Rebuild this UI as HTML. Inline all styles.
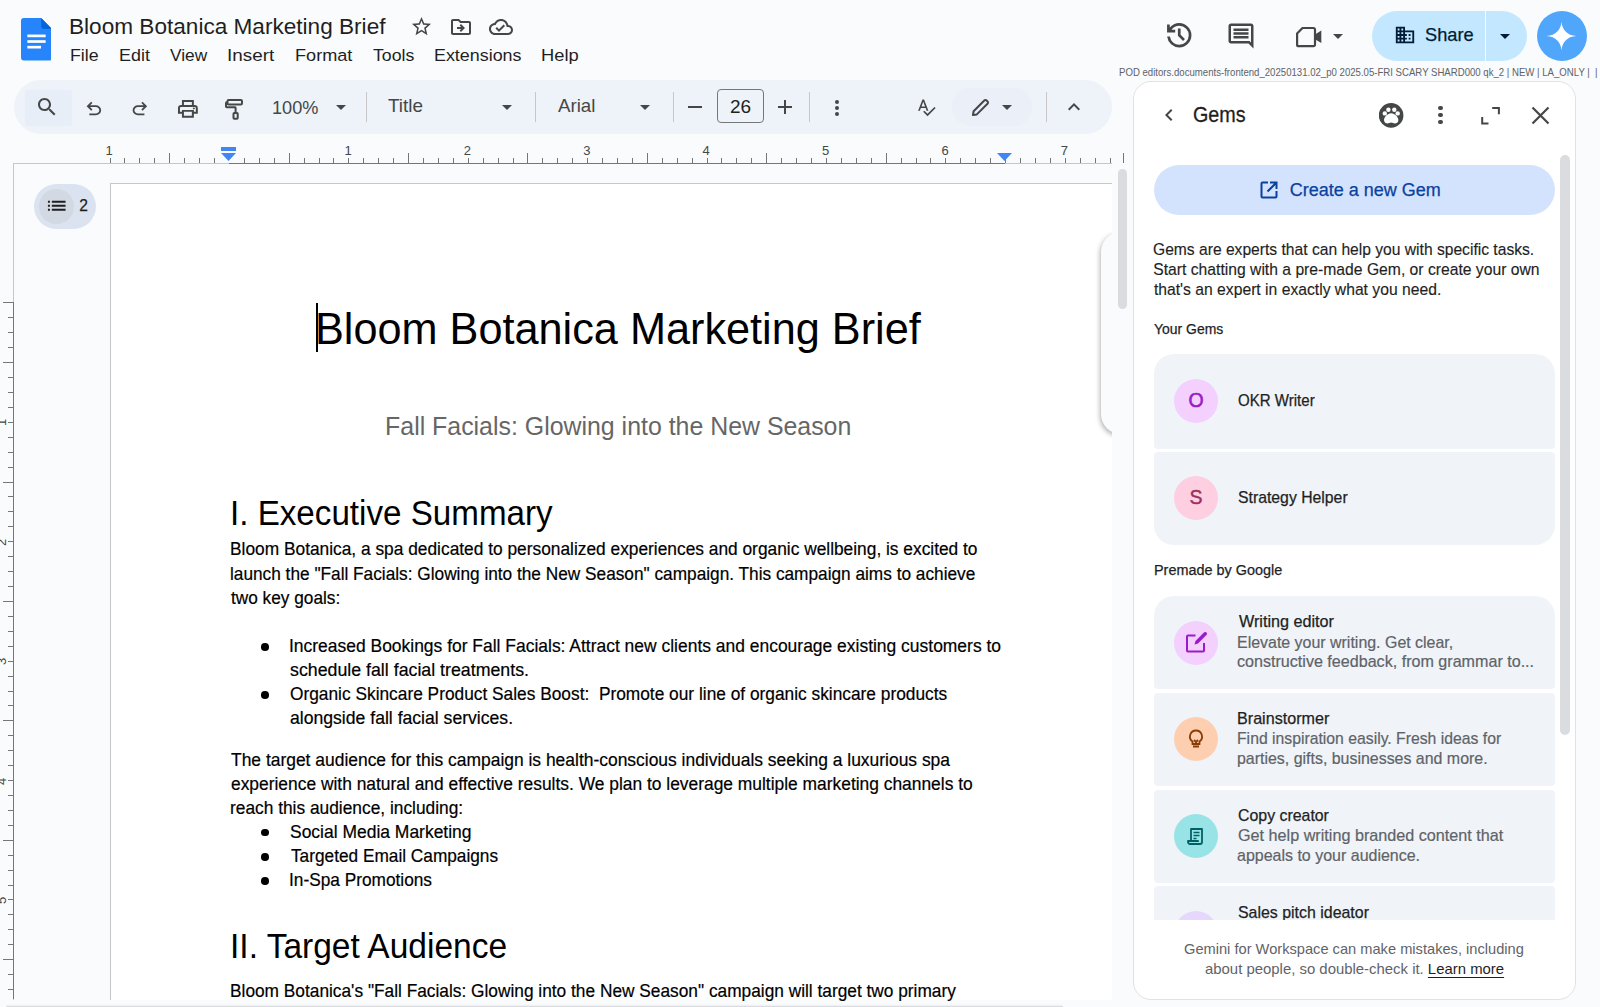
<!DOCTYPE html>
<html><head><meta charset="utf-8">
<style>
*{margin:0;padding:0;box-sizing:border-box}
html,body{width:1600px;height:1007px;overflow:hidden;background:#f9fbfd;font-family:"Liberation Sans",sans-serif;color:#1f1f1f;position:relative}
.a{position:absolute}
.t{position:absolute;white-space:nowrap;line-height:1}
svg{display:block}
</style></head>
<body>
<svg class="a" style="left:20.6px;top:18.3px" width="30.8" height="42.6" viewBox="0 0 32 43" preserveAspectRatio="none">
<path d="M3 0H21L32 11V40a3 3 0 0 1-3 3H3a3 3 0 0 1-3-3V3a3 3 0 0 1 3-3z" fill="#2684fc"/>
<path d="M21 0L32 11H24a3 3 0 0 1-3-3z" fill="#0066da"/>
<rect x="6.6" y="16.7" width="19" height="2.7" fill="#fff"/>
<rect x="6.6" y="22.4" width="19" height="2.7" fill="#fff"/>
<rect x="6.6" y="28.1" width="14.2" height="2.7" fill="#fff"/></svg>
<div class="t" id="doctitle" style="left:69.03px;top:16.46px;font-size:22.6px;color:#1f1f1f;font-weight:400;">Bloom Botanica Marketing Brief</div>
<div class="t" id="menu0" style="left:70.20px;top:46.57px;font-size:17.4px;color:#1f1f1f;font-weight:400;transform:scaleX(1.0192);transform-origin:0 0;">File</div>
<div class="t" id="menu1" style="left:118.67px;top:46.57px;font-size:17.4px;color:#1f1f1f;font-weight:400;transform:scaleX(1.0298);transform-origin:0 0;">Edit</div>
<div class="t" id="menu2" style="left:170.11px;top:46.57px;font-size:17.4px;color:#1f1f1f;font-weight:400;transform:scaleX(0.9939);transform-origin:0 0;">View</div>
<div class="t" id="menu3" style="left:226.98px;top:46.57px;font-size:17.4px;color:#1f1f1f;font-weight:400;transform:scaleX(1.0846);transform-origin:0 0;">Insert</div>
<div class="t" id="menu4" style="left:294.57px;top:46.57px;font-size:17.4px;color:#1f1f1f;font-weight:400;transform:scaleX(1.0420);transform-origin:0 0;">Format</div>
<div class="t" id="menu5" style="left:373.39px;top:46.57px;font-size:17.4px;color:#1f1f1f;font-weight:400;transform:scaleX(1.0200);transform-origin:0 0;">Tools</div>
<div class="t" id="menu6" style="left:434.49px;top:46.57px;font-size:17.4px;color:#1f1f1f;font-weight:400;transform:scaleX(1.0285);transform-origin:0 0;">Extensions</div>
<div class="t" id="menu7" style="left:540.72px;top:46.57px;font-size:17.4px;color:#1f1f1f;font-weight:400;transform:scaleX(1.0533);transform-origin:0 0;">Help</div>
<svg class="a" style="left:409.50px;top:14.50px" width="23" height="23" viewBox="0 0 24 24"><path d="M22 9.24l-7.19-.62L12 2 9.19 8.63 2 9.24l5.46 4.73L5.82 21 12 17.27 18.18 21l-1.63-7.03L22 9.24zM12 15.4l-3.76 2.27 1-4.28-3.32-2.88 4.38-.38L12 6.1l1.71 4.04 4.38.38-3.32 2.88 1 4.28L12 15.4z" fill="#444746"/></svg>
<svg class="a" style="left:449.00px;top:14.50px" width="24" height="24" viewBox="0 0 24 24"><path d="M20 6h-8l-2-2H4c-1.1 0-1.99.9-1.99 2L2 18c0 1.1.9 2 2 2h16c1.1 0 2-.9 2-2V8c0-1.1-.9-2-2-2zm0 12H4V6h5.17l2 2H20v10zm-7.84-6H8v2h4.16l-1.59 1.59L11.99 17 16 13.01 11.99 9l-1.41 1.41L12.16 12z" fill="#444746"/></svg>
<svg class="a" style="left:489.00px;top:14.50px" width="24" height="24" viewBox="0 0 24 24"><path d="M19.35 10.04C18.67 6.59 15.64 4 12 4 9.11 4 6.6 5.64 5.35 8.04 2.34 8.36 0 10.91 0 14c0 3.31 2.69 6 6 6h13c2.76 0 5-2.24 5-5 0-2.64-2.05-4.78-4.65-4.96zM19 18H6c-2.21 0-4-1.79-4-4 0-2.05 1.53-3.76 3.56-3.97l1.07-.11.5-.95C8.08 7.14 9.94 6 12 6c2.62 0 4.88 1.86 5.39 4.43l.3 1.5 1.53.11c1.56.1 2.78 1.41 2.78 2.96 0 1.65-1.35 3-3 3zm-9-3.82l-2.09-2.09L6.5 13.5 10 17l6.01-6.01-1.41-1.41z" fill="#444746"/></svg>
<svg class="a" style="left:1162.75px;top:19.05px" width="32.5" height="32.5" viewBox="0 -960 960 960"><path d="M480-120q-138 0-240.5-91.5T122-440h82q14 104 92.5 172T480-200q117 0 198.5-81.5T760-480q0-117-81.5-198.5T480-760q-69 0-129 32t-101 88h110v80H120v-240h80v94q51-64 124.5-99T480-840q75 0 140.5 28.5t114 77q48.5 48.5 77 114T840-480q0 75-28.5 140.5t-77 114q-48.5 48.5-114 77T480-120Zm112-192L440-464v-216h80v184l128 128-56 56Z" fill="#444746"/></svg>
<svg class="a" style="left:1225.60px;top:21.00px" width="30" height="30" viewBox="0 0 24 24"><path d="M21.99 4c0-1.1-.89-2-1.99-2H4c-1.1 0-2 .9-2 2v12c0 1.1.9 2 2 2h14l4 4-.01-18zM20 4v13.17L18.83 16H4V4h16zM6 12h12v2H6zm0-3h12v2H6zm0-3h12v2H6z" fill="#444746"/></svg>
<svg class="a" style="left:1290px;top:20px" width="36" height="32" viewBox="0 0 36 32"><path d="M7.1 13.5L12.5 8H23.5a1.5 1.5 0 0 1 1.5 1.5V24.7a1.5 1.5 0 0 1-1.5 1.5H8.6a1.5 1.5 0 0 1-1.5-1.5Z" fill="none" stroke="#444746" stroke-width="2.2" stroke-linejoin="round"/><path d="M25 14.5L31.3 10.6V23L25 19.2Z" fill="#444746"/></svg>
<svg class="a" style="left:1326.00px;top:24.00px" width="24" height="24" viewBox="0 0 24 24"><path d="M7 10l5 5 5-5z" fill="#444746"/></svg>
<div class="a" style="left:1372px;top:11px;width:155px;height:50px;border-radius:25px;background:#c2e7ff"></div>
<div class="a" style="left:1484.5px;top:11px;width:1.5px;height:50px;background:#f9fbfd"></div>
<svg class="a" style="left:1393.70px;top:24.00px" width="22" height="22" viewBox="0 0 24 24"><path d="M12 7V3H2v18h20V7H10zM6 19H4v-2h2v2zm0-4H4v-2h2v2zm0-4H4V9h2v2zm0-4H4V5h2v2zm4 12H8v-2h2v2zm0-4H8v-2h2v2zm0-4H8V9h2v2zm0-4H8V5h2v2zm10 12h-8v-2h2v-2h-2v-2h2v-2h-2V9h8v10zm-2-8h-2v2h2v-2zm0 4h-2v2h2v-2z" fill="#001d35"/></svg>
<div class="t" id="share" style="left:1424.98px;top:25.16px;font-size:19px;color:#001d35;font-weight:400;transform:scaleX(0.9592);transform-origin:0 0;-webkit-text-stroke:0.25px #001d35;">Share</div>
<svg class="a" style="left:1493.00px;top:24.00px" width="24" height="24" viewBox="0 0 24 24"><path d="M7 10l5 5 5-5z" fill="#001d35"/></svg>
<div class="a" style="left:1537px;top:11px;width:50px;height:50px;border-radius:25px;background:#50a6fb"></div>
<svg class="a" style="left:1546px;top:20.5px" width="31" height="30" viewBox="0 0 31 30"><path d="M15.5 0.5C16 8.5 21 14.5 30.5 15 21 15.5 16 21.5 15.5 29.5 15 21.5 10 15.5 0.5 15 10 14.5 15 8.5 15.5 0.5z" fill="#fff"/></svg>
<div class="t" id="pod" style="left:1119.22px;top:68.36px;font-size:10.2px;color:#5f6368;font-weight:400;transform:scaleX(0.9429);transform-origin:0 0;">POD editors.documents-frontend_20250131.02_p0 2025.05-FRI SCARY SHARD000 qk_2 | NEW | LA_ONLY |&nbsp; |</div>
<div class="a" style="left:14px;top:80px;width:1098px;height:54px;border-radius:27px;background:#eef2f9"></div>
<div class="a" style="left:24.5px;top:89.5px;width:47.5px;height:36px;border-radius:2px;background:#e8eef8"></div>
<div class="a" style="left:952px;top:88px;width:80px;height:38px;border-radius:19px;background:#eaeff8"></div>
<svg class="a" style="left:34.80px;top:95.00px" width="24" height="24" viewBox="0 0 24 24"><path d="M15.5 14h-.79l-.28-.27C15.41 12.59 16 11.11 16 9.5 16 5.91 13.09 3 9.5 3S3 5.91 3 9.5 5.91 16 9.5 16c1.61 0 3.09-.59 4.23-1.57l.27.28v.79l5 4.99L20.49 19l-4.99-5zm-6 0C7.01 14 5 11.99 5 9.5S7.01 5 9.5 5 14 7.01 14 9.5 11.99 14 9.5 14z" fill="#444746"/></svg>
<svg class="a" style="left:82.9px;top:98.4px" width="21.75" height="21.75" viewBox="0 -960 960 960"><path d="M280-200v-80h284q63 0 109.5-40T720-420q0-60-46.5-100T564-560H312l104 104-56 56-200-200 200-200 56 56-104 104h252q97 0 166.5 63T800-420q0 94-69.5 157T564-200H280Z" fill="#444746"/></svg>
<svg class="a" style="left:129.1px;top:98.4px" width="21.75" height="21.75" viewBox="0 -960 960 960"><path d="M396-200q-97 0-166.5-63T160-420q0-94 69.5-157T396-640h252L544-744l56-56 200 200-200 200-56-56 104-104H396q-63 0-109.5 40T240-420q0 60 46.5 100T396-280h284v80H396Z" fill="#444746"/></svg>
<svg class="a" style="left:175.8px;top:96.5px" width="23.8" height="23.8" viewBox="0 -960 960 960"><path d="M640-640v-120H320v120h-80v-200h480v200h-80Zm-480 80h640-640Zm560 100q17 0 28.5-11.5T760-500q0-17-11.5-28.5T720-540q-17 0-28.5 11.5T680-500q0 17 11.5 28.5T720-460Zm-80 260v-160H320v160h320Zm80 80H240v-160H80v-240q0-51 35-85.5t85-34.5h560q51 0 85.5 34.5T880-520v240H720v160Zm80-240v-160q0-17-11.5-28.5T760-560H200q-17 0-28.5 11.5T160-520v160h80v-80h480v80h80Z" fill="#444746"/></svg>
<svg class="a" style="left:220px;top:94px" width="28" height="28" viewBox="0 0 28 28"><rect x="7.5" y="6" width="14.5" height="4.5" rx="1.2" fill="none" stroke="#444746" stroke-width="2"/><path d="M7.5 8.3H6.8a0.8 0.8 0 0 0-0.8 0.8V12.5a0.8 0.8 0 0 0 0.8 0.8H15.1a0.5 0.5 0 0 1 0.5 0.5V18.5" fill="none" stroke="#444746" stroke-width="2"/><rect x="13.5" y="19" width="4.2" height="5.8" rx="0.8" fill="none" stroke="#444746" stroke-width="2"/></svg>
<div class="t" id="zoom" style="left:272.30px;top:98.21px;font-size:19px;color:#444746;font-weight:400;transform:scaleX(0.9547);transform-origin:0 0;">100%</div>
<svg class="a" style="left:329.00px;top:95.00px" width="24" height="24" viewBox="0 0 24 24"><path d="M7 10l5 5 5-5z" fill="#444746"/></svg>
<div class="a" style="left:365.5px;top:92px;width:1px;height:30px;background:#c7c7c7"></div>
<div class="a" style="left:534.5px;top:92px;width:1px;height:30px;background:#c7c7c7"></div>
<div class="a" style="left:672.5px;top:92px;width:1px;height:30px;background:#c7c7c7"></div>
<div class="a" style="left:808.5px;top:92px;width:1px;height:30px;background:#c7c7c7"></div>
<div class="a" style="left:1045.5px;top:92px;width:1px;height:30px;background:#c7c7c7"></div>
<div class="t" id="tstyle" style="left:388.24px;top:96.31px;font-size:19px;color:#444746;font-weight:400;transform:scaleX(0.9938);transform-origin:0 0;">Title</div>
<svg class="a" style="left:495.00px;top:95.00px" width="24" height="24" viewBox="0 0 24 24"><path d="M7 10l5 5 5-5z" fill="#444746"/></svg>
<div class="t" id="tfont" style="left:558.18px;top:96.31px;font-size:19px;color:#444746;font-weight:400;transform:scaleX(0.9840);transform-origin:0 0;">Arial</div>
<svg class="a" style="left:633.00px;top:95.00px" width="24" height="24" viewBox="0 0 24 24"><path d="M7 10l5 5 5-5z" fill="#444746"/></svg>
<div class="a" style="left:688px;top:106px;width:14px;height:2px;background:#444746"></div>
<div class="a" style="left:717px;top:89px;width:47px;height:34px;border-radius:4px;border:1px solid #747775"></div>
<div class="t" id="fsize" style="left:140.5px;width:1200px;text-align:center;top:96.91px;font-size:19px;color:#1f1f1f;font-weight:400;">26</div>
<div class="a" style="left:778px;top:106px;width:14px;height:2px;background:#444746"></div>
<div class="a" style="left:784px;top:100px;width:2px;height:14px;background:#444746"></div>
<div class="a" style="left:835px;top:100.2px;width:4px;height:4px;border-radius:2px;background:#444746"></div>
<div class="a" style="left:835px;top:106.2px;width:4px;height:4px;border-radius:2px;background:#444746"></div>
<div class="a" style="left:835px;top:112.2px;width:4px;height:4px;border-radius:2px;background:#444746"></div>
<svg class="a" style="left:915.75px;top:97.25px" width="20.5" height="20.5" viewBox="0 0 24 24"><path d="M12.45 16h2.09L9.43 3H7.57L2.46 16h2.09l1.12-3h5.64l1.14 3zm-6.02-5L8.5 5.48 10.57 11H6.43zm15.16.59l-8.09 8.09L9.83 16l-1.41 1.41 5.09 5.09L23 13l-1.41-1.41z" fill="#444746"/></svg>
<svg class="a" style="left:968px;top:95px" width="24" height="24" viewBox="0 0 24 24"><path d="M5 20L5.6 16.2L16.3 5.5a1.6 1.6 0 0 1 2.3 0L19.5 6.4a1.6 1.6 0 0 1 0 2.3L8.8 19.4Z" fill="none" stroke="#444746" stroke-width="2" stroke-linejoin="round"/></svg>
<svg class="a" style="left:995.00px;top:95.00px" width="24" height="24" viewBox="0 0 24 24"><path d="M7 10l5 5 5-5z" fill="#444746"/></svg>
<svg class="a" style="left:1062.00px;top:95.00px" width="24" height="24" viewBox="0 0 24 24"><path d="M12 8l-6 6 1.41 1.41L12 10.83l4.59 4.58L18 14z" fill="#444746"/></svg>
<div class="a" style="left:13px;top:163px;width:1099px;height:837px;border-left:1px solid #c7c7c7;border-top:1px solid #c7c7c7"></div>
<div class="a" style="left:229.4px;top:163px;width:775.2px;height:1px;background:#747775"></div>
<div class="a" style="left:124.4px;top:158px;width:1px;height:5px;background:#747775"></div><div class="a" style="left:139.3px;top:158px;width:1px;height:5px;background:#747775"></div><div class="a" style="left:154.3px;top:158px;width:1px;height:5px;background:#747775"></div><div class="a" style="left:169.2px;top:153px;width:1px;height:10px;background:#747775"></div><div class="a" style="left:184.1px;top:158px;width:1px;height:5px;background:#747775"></div><div class="a" style="left:199.1px;top:158px;width:1px;height:5px;background:#747775"></div><div class="a" style="left:214.0px;top:158px;width:1px;height:5px;background:#747775"></div><div class="a" style="left:243.8px;top:158px;width:1px;height:5px;background:#747775"></div><div class="a" style="left:258.8px;top:158px;width:1px;height:5px;background:#747775"></div><div class="a" style="left:273.7px;top:158px;width:1px;height:5px;background:#747775"></div><div class="a" style="left:288.6px;top:153px;width:1px;height:10px;background:#747775"></div><div class="a" style="left:303.5px;top:158px;width:1px;height:5px;background:#747775"></div><div class="a" style="left:318.5px;top:158px;width:1px;height:5px;background:#747775"></div><div class="a" style="left:333.4px;top:158px;width:1px;height:5px;background:#747775"></div><div class="a" style="left:363.2px;top:158px;width:1px;height:5px;background:#747775"></div><div class="a" style="left:378.1px;top:158px;width:1px;height:5px;background:#747775"></div><div class="a" style="left:393.1px;top:158px;width:1px;height:5px;background:#747775"></div><div class="a" style="left:408.0px;top:153px;width:1px;height:10px;background:#747775"></div><div class="a" style="left:422.9px;top:158px;width:1px;height:5px;background:#747775"></div><div class="a" style="left:437.9px;top:158px;width:1px;height:5px;background:#747775"></div><div class="a" style="left:452.8px;top:158px;width:1px;height:5px;background:#747775"></div><div class="a" style="left:482.6px;top:158px;width:1px;height:5px;background:#747775"></div><div class="a" style="left:497.6px;top:158px;width:1px;height:5px;background:#747775"></div><div class="a" style="left:512.5px;top:158px;width:1px;height:5px;background:#747775"></div><div class="a" style="left:527.4px;top:153px;width:1px;height:10px;background:#747775"></div><div class="a" style="left:542.3px;top:158px;width:1px;height:5px;background:#747775"></div><div class="a" style="left:557.2px;top:158px;width:1px;height:5px;background:#747775"></div><div class="a" style="left:572.2px;top:158px;width:1px;height:5px;background:#747775"></div><div class="a" style="left:602.0px;top:158px;width:1px;height:5px;background:#747775"></div><div class="a" style="left:617.0px;top:158px;width:1px;height:5px;background:#747775"></div><div class="a" style="left:631.9px;top:158px;width:1px;height:5px;background:#747775"></div><div class="a" style="left:646.8px;top:153px;width:1px;height:10px;background:#747775"></div><div class="a" style="left:661.7px;top:158px;width:1px;height:5px;background:#747775"></div><div class="a" style="left:676.6px;top:158px;width:1px;height:5px;background:#747775"></div><div class="a" style="left:691.6px;top:158px;width:1px;height:5px;background:#747775"></div><div class="a" style="left:721.4px;top:158px;width:1px;height:5px;background:#747775"></div><div class="a" style="left:736.4px;top:158px;width:1px;height:5px;background:#747775"></div><div class="a" style="left:751.3px;top:158px;width:1px;height:5px;background:#747775"></div><div class="a" style="left:766.2px;top:153px;width:1px;height:10px;background:#747775"></div><div class="a" style="left:781.1px;top:158px;width:1px;height:5px;background:#747775"></div><div class="a" style="left:796.0px;top:158px;width:1px;height:5px;background:#747775"></div><div class="a" style="left:811.0px;top:158px;width:1px;height:5px;background:#747775"></div><div class="a" style="left:840.8px;top:158px;width:1px;height:5px;background:#747775"></div><div class="a" style="left:855.8px;top:158px;width:1px;height:5px;background:#747775"></div><div class="a" style="left:870.7px;top:158px;width:1px;height:5px;background:#747775"></div><div class="a" style="left:885.6px;top:153px;width:1px;height:10px;background:#747775"></div><div class="a" style="left:900.5px;top:158px;width:1px;height:5px;background:#747775"></div><div class="a" style="left:915.5px;top:158px;width:1px;height:5px;background:#747775"></div><div class="a" style="left:930.4px;top:158px;width:1px;height:5px;background:#747775"></div><div class="a" style="left:960.2px;top:158px;width:1px;height:5px;background:#747775"></div><div class="a" style="left:975.1px;top:158px;width:1px;height:5px;background:#747775"></div><div class="a" style="left:990.1px;top:158px;width:1px;height:5px;background:#747775"></div><div class="a" style="left:1005.0px;top:153px;width:1px;height:10px;background:#747775"></div><div class="a" style="left:1019.9px;top:158px;width:1px;height:5px;background:#747775"></div><div class="a" style="left:1034.9px;top:158px;width:1px;height:5px;background:#747775"></div><div class="a" style="left:1049.8px;top:158px;width:1px;height:5px;background:#747775"></div><div class="a" style="left:1079.6px;top:158px;width:1px;height:5px;background:#747775"></div><div class="a" style="left:1094.6px;top:158px;width:1px;height:5px;background:#747775"></div><div class="a" style="left:1109.5px;top:158px;width:1px;height:5px;background:#747775"></div>
<div class="t" id="rn0" style="left:-490.8px;width:1200px;text-align:center;top:144.49px;font-size:13px;color:#444746;font-weight:400;">1</div>
<div class="a" style="left:109.5px;top:158px;width:1px;height:5px;background:#747775"></div>
<div class="t" id="rn2" style="left:-252.0px;width:1200px;text-align:center;top:144.49px;font-size:13px;color:#444746;font-weight:400;">1</div>
<div class="a" style="left:348.3px;top:158px;width:1px;height:5px;background:#747775"></div>
<div class="t" id="rn3" style="left:-132.59999999999997px;width:1200px;text-align:center;top:144.49px;font-size:13px;color:#444746;font-weight:400;">2</div>
<div class="a" style="left:467.7px;top:158px;width:1px;height:5px;background:#747775"></div>
<div class="t" id="rn4" style="left:-13.199999999999932px;width:1200px;text-align:center;top:144.49px;font-size:13px;color:#444746;font-weight:400;">3</div>
<div class="a" style="left:587.1px;top:158px;width:1px;height:5px;background:#747775"></div>
<div class="t" id="rn5" style="left:106.20000000000005px;width:1200px;text-align:center;top:144.49px;font-size:13px;color:#444746;font-weight:400;">4</div>
<div class="a" style="left:706.5px;top:158px;width:1px;height:5px;background:#747775"></div>
<div class="t" id="rn6" style="left:225.60000000000002px;width:1200px;text-align:center;top:144.49px;font-size:13px;color:#444746;font-weight:400;">5</div>
<div class="a" style="left:825.9px;top:158px;width:1px;height:5px;background:#747775"></div>
<div class="t" id="rn7" style="left:345.0000000000001px;width:1200px;text-align:center;top:144.49px;font-size:13px;color:#444746;font-weight:400;">6</div>
<div class="a" style="left:945.3px;top:158px;width:1px;height:5px;background:#747775"></div>
<div class="t" id="rn8" style="left:464.4000000000001px;width:1200px;text-align:center;top:144.49px;font-size:13px;color:#444746;font-weight:400;">7</div>
<div class="a" style="left:1064.7px;top:158px;width:1px;height:5px;background:#747775"></div>
<div class="a" style="left:1123px;top:153px;width:1px;height:10px;background:#747775"></div>
<div class="a" style="left:221px;top:147px;width:15px;height:4px;background:#4285f4"></div>
<svg class="a" style="left:221px;top:153px" width="15" height="8" viewBox="0 0 15 8"><path d="M0 0H15L7.5 8z" fill="#4285f4"/></svg>
<svg class="a" style="left:997.3px;top:153px" width="15" height="8" viewBox="0 0 15 8"><path d="M0 0H15L7.5 8z" fill="#4285f4"/></svg>
<div class="a" style="left:13px;top:302px;width:1px;height:697px;background:#747775"></div>
<div class="a" style="left:3px;top:302.4px;width:10px;height:1px;background:#747775"></div><div class="a" style="left:8px;top:317.3px;width:5px;height:1px;background:#747775"></div><div class="a" style="left:8px;top:332.2px;width:5px;height:1px;background:#747775"></div><div class="a" style="left:8px;top:347.2px;width:5px;height:1px;background:#747775"></div><div class="a" style="left:3px;top:362.1px;width:10px;height:1px;background:#747775"></div><div class="a" style="left:8px;top:377.0px;width:5px;height:1px;background:#747775"></div><div class="a" style="left:8px;top:391.9px;width:5px;height:1px;background:#747775"></div><div class="a" style="left:8px;top:406.9px;width:5px;height:1px;background:#747775"></div><div class="a" style="left:8px;top:421.8px;width:5px;height:1px;background:#747775"></div><div class="t" style="left:-2px;top:416.3px;font-size:13px;color:#444746;transform:rotate(-90deg)">1</div><div class="a" style="left:8px;top:436.7px;width:5px;height:1px;background:#747775"></div><div class="a" style="left:8px;top:451.6px;width:5px;height:1px;background:#747775"></div><div class="a" style="left:8px;top:466.6px;width:5px;height:1px;background:#747775"></div><div class="a" style="left:3px;top:481.5px;width:10px;height:1px;background:#747775"></div><div class="a" style="left:8px;top:496.4px;width:5px;height:1px;background:#747775"></div><div class="a" style="left:8px;top:511.4px;width:5px;height:1px;background:#747775"></div><div class="a" style="left:8px;top:526.3px;width:5px;height:1px;background:#747775"></div><div class="a" style="left:8px;top:541.2px;width:5px;height:1px;background:#747775"></div><div class="t" style="left:-2px;top:535.7px;font-size:13px;color:#444746;transform:rotate(-90deg)">2</div><div class="a" style="left:8px;top:556.1px;width:5px;height:1px;background:#747775"></div><div class="a" style="left:8px;top:571.0px;width:5px;height:1px;background:#747775"></div><div class="a" style="left:8px;top:586.0px;width:5px;height:1px;background:#747775"></div><div class="a" style="left:3px;top:600.9px;width:10px;height:1px;background:#747775"></div><div class="a" style="left:8px;top:615.8px;width:5px;height:1px;background:#747775"></div><div class="a" style="left:8px;top:630.8px;width:5px;height:1px;background:#747775"></div><div class="a" style="left:8px;top:645.7px;width:5px;height:1px;background:#747775"></div><div class="a" style="left:8px;top:660.6px;width:5px;height:1px;background:#747775"></div><div class="t" style="left:-2px;top:655.1px;font-size:13px;color:#444746;transform:rotate(-90deg)">3</div><div class="a" style="left:8px;top:675.5px;width:5px;height:1px;background:#747775"></div><div class="a" style="left:8px;top:690.5px;width:5px;height:1px;background:#747775"></div><div class="a" style="left:8px;top:705.4px;width:5px;height:1px;background:#747775"></div><div class="a" style="left:3px;top:720.3px;width:10px;height:1px;background:#747775"></div><div class="a" style="left:8px;top:735.2px;width:5px;height:1px;background:#747775"></div><div class="a" style="left:8px;top:750.1px;width:5px;height:1px;background:#747775"></div><div class="a" style="left:8px;top:765.1px;width:5px;height:1px;background:#747775"></div><div class="a" style="left:8px;top:780.0px;width:5px;height:1px;background:#747775"></div><div class="t" style="left:-2px;top:774.5px;font-size:13px;color:#444746;transform:rotate(-90deg)">4</div><div class="a" style="left:8px;top:794.9px;width:5px;height:1px;background:#747775"></div><div class="a" style="left:8px;top:809.9px;width:5px;height:1px;background:#747775"></div><div class="a" style="left:8px;top:824.8px;width:5px;height:1px;background:#747775"></div><div class="a" style="left:3px;top:839.7px;width:10px;height:1px;background:#747775"></div><div class="a" style="left:8px;top:854.6px;width:5px;height:1px;background:#747775"></div><div class="a" style="left:8px;top:869.5px;width:5px;height:1px;background:#747775"></div><div class="a" style="left:8px;top:884.5px;width:5px;height:1px;background:#747775"></div><div class="a" style="left:8px;top:899.4px;width:5px;height:1px;background:#747775"></div><div class="t" style="left:-2px;top:893.9px;font-size:13px;color:#444746;transform:rotate(-90deg)">5</div><div class="a" style="left:8px;top:914.3px;width:5px;height:1px;background:#747775"></div><div class="a" style="left:8px;top:929.2px;width:5px;height:1px;background:#747775"></div><div class="a" style="left:8px;top:944.2px;width:5px;height:1px;background:#747775"></div><div class="a" style="left:3px;top:959.1px;width:10px;height:1px;background:#747775"></div><div class="a" style="left:8px;top:974.0px;width:5px;height:1px;background:#747775"></div><div class="a" style="left:8px;top:989.0px;width:5px;height:1px;background:#747775"></div>
<div class="a" style="left:34px;top:184px;width:62px;height:45px;border-radius:22.5px;background:#dbe3f0"></div>
<div class="a" style="left:39px;top:189px;width:35px;height:35px;border-radius:17.5px;background:#d3d9e3"></div>
<svg class="a" style="left:45.05px;top:194.25px" width="23.5" height="23.5" viewBox="0 0 24 24"><path d="M3 13h2v-2H3v2zm0 4h2v-2H3v2zm0-8h2V7H3v2zm4 4h14v-2H7v2zm0 4h14v-2H7v2zM7 7v2h14V7H7z" fill="#1f1f1f"/></svg>
<div class="t" id="olcount" style="left:-516.4px;width:1200px;text-align:center;top:198.19px;font-size:15.6px;color:#1f1f1f;font-weight:400;-webkit-text-stroke:0.25px #1f1f1f;">2</div>
<div class="a" style="left:110px;top:183px;width:1002px;height:817px;background:#fff;border-left:1px solid #c7c7c7;border-top:1px solid #c7c7c7"></div>
<div class="a" style="left:5.5px;top:1005.5px;width:1057px;height:2px;border-radius:1px;background:#dadce0;box-shadow:0 -1px 2px rgba(0,0,0,.06)"></div>
<div class="t" id="dtitle" style="left:315.18px;top:305.87px;font-size:44.8px;color:#000;font-weight:400;transform:scaleX(0.9654);transform-origin:0 0;">Bloom Botanica Marketing Brief</div>
<div class="a" style="left:316.2px;top:303px;width:1.6px;height:49px;background:#000"></div>
<div class="t" id="dsub" style="left:385.08px;top:413.62px;font-size:24.9px;color:#666666;font-weight:400;">Fall Facials: Glowing into the New Season</div>
<div class="t" id="dh1" style="left:229.53px;top:495.73px;font-size:34.8px;color:#000;font-weight:400;transform:scaleX(0.9535);transform-origin:0 0;">I. Executive Summary</div>
<div class="t" id="b0" style="left:230.33px;top:540.29px;font-size:18.26px;color:#000;font-weight:400;transform:scaleX(0.9495);transform-origin:0 0;-webkit-text-stroke:0.2px #000;">Bloom Botanica, a spa dedicated to personalized experiences and organic wellbeing, is excited to</div>
<div class="t" id="b1" style="left:229.98px;top:564.64px;font-size:18.26px;color:#000;font-weight:400;transform:scaleX(0.9450);transform-origin:0 0;-webkit-text-stroke:0.2px #000;">launch the "Fall Facials: Glowing into the New Season" campaign. This campaign aims to achieve</div>
<div class="t" id="b2" style="left:230.82px;top:588.64px;font-size:18.26px;color:#000;font-weight:400;transform:scaleX(0.9446);transform-origin:0 0;-webkit-text-stroke:0.2px #000;">two key goals:</div>
<div class="t" id="b3" style="left:289.11px;top:636.84px;font-size:18.26px;color:#000;font-weight:400;transform:scaleX(0.9563);transform-origin:0 0;-webkit-text-stroke:0.2px #000;">Increased Bookings for Fall Facials: Attract new clients and encourage existing customers to</div>
<div class="t" id="b4" style="left:289.74px;top:660.74px;font-size:18.26px;color:#000;font-weight:400;transform:scaleX(0.9735);transform-origin:0 0;-webkit-text-stroke:0.2px #000;">schedule fall facial treatments.</div>
<div class="t" id="b5" style="left:290.14px;top:684.84px;font-size:18.26px;color:#000;font-weight:400;transform:scaleX(0.9486);transform-origin:0 0;-webkit-text-stroke:0.2px #000;">Organic Skincare Product Sales Boost:&nbsp; Promote our line of organic skincare products</div>
<div class="t" id="b6" style="left:290.34px;top:708.84px;font-size:18.26px;color:#000;font-weight:400;transform:scaleX(0.9644);transform-origin:0 0;-webkit-text-stroke:0.2px #000;">alongside fall facial services.</div>
<div class="t" id="b7" style="left:231.28px;top:750.74px;font-size:18.26px;color:#000;font-weight:400;transform:scaleX(0.9552);transform-origin:0 0;-webkit-text-stroke:0.2px #000;">The target audience for this campaign is health-conscious individuals seeking a luxurious spa</div>
<div class="t" id="b8" style="left:230.90px;top:774.64px;font-size:18.26px;color:#000;font-weight:400;transform:scaleX(0.9528);transform-origin:0 0;-webkit-text-stroke:0.2px #000;">experience with natural and effective results. We plan to leverage multiple marketing channels to</div>
<div class="t" id="b9" style="left:229.97px;top:798.94px;font-size:18.26px;color:#000;font-weight:400;transform:scaleX(0.9495);transform-origin:0 0;-webkit-text-stroke:0.2px #000;">reach this audience, including:</div>
<div class="t" id="b10" style="left:290.02px;top:822.74px;font-size:18.26px;color:#000;font-weight:400;transform:scaleX(0.9570);transform-origin:0 0;-webkit-text-stroke:0.2px #000;">Social Media Marketing</div>
<div class="t" id="b11" style="left:290.84px;top:846.94px;font-size:18.26px;color:#000;font-weight:400;transform:scaleX(0.9451);transform-origin:0 0;-webkit-text-stroke:0.2px #000;">Targeted Email Campaigns</div>
<div class="t" id="b12" style="left:289.25px;top:870.94px;font-size:18.26px;color:#000;font-weight:400;transform:scaleX(0.9461);transform-origin:0 0;-webkit-text-stroke:0.2px #000;">In-Spa Promotions</div>
<div class="t" id="b13" style="left:230.33px;top:981.54px;font-size:18.26px;color:#000;font-weight:400;transform:scaleX(0.9476);transform-origin:0 0;-webkit-text-stroke:0.2px #000;">Bloom Botanica's "Fall Facials: Glowing into the New Season" campaign will target two primary</div>
<div class="a" style="left:261.3px;top:643.0px;width:7.6px;height:7.6px;border-radius:50%;background:#000"></div>
<div class="a" style="left:261.3px;top:691.0px;width:7.6px;height:7.6px;border-radius:50%;background:#000"></div>
<div class="a" style="left:261.3px;top:828.9px;width:7.6px;height:7.6px;border-radius:50%;background:#000"></div>
<div class="a" style="left:261.3px;top:853.1px;width:7.6px;height:7.6px;border-radius:50%;background:#000"></div>
<div class="a" style="left:261.3px;top:877.1px;width:7.6px;height:7.6px;border-radius:50%;background:#000"></div>
<div class="t" id="dh2" style="left:229.67px;top:928.69px;font-size:34.5px;color:#000;font-weight:400;transform:scaleX(0.9717);transform-origin:0 0;">II. Target Audience</div>
<div class="a" style="left:1100.5px;top:232px;width:40px;height:202px;border-radius:20px;background:#f9fbfd;box-shadow:-1px 2px 5px rgba(0,0,0,.3)"></div>
<div class="a" style="left:1112px;top:163px;width:21px;height:844px;background:#f9fbfd"></div>
<div class="a" style="left:1117.5px;top:169px;width:9px;height:140px;border-radius:4.5px;background:#dadce0"></div>
<div class="a" style="left:1132.5px;top:80.5px;width:443.5px;height:919.5px;border-radius:18px;background:#fff;border:1px solid #e1e3e1"></div>
<svg class="a" style="left:1156.75px;top:103.00px" width="24" height="24" viewBox="0 0 24 24"><path d="M15.41 7.41L14 6l-6 6 6 6 1.41-1.41L10.83 12z" fill="#444746"/></svg>
<div class="t" id="gems" style="left:1193.49px;top:103.83px;font-size:22.4px;color:#1f1f1f;font-weight:400;transform:scaleX(0.8814);transform-origin:0 0;-webkit-text-stroke:0.3px #1f1f1f;">Gems</div>
<svg class="a" style="left:1379px;top:103px" width="25" height="25" viewBox="0 0 25 25"><circle cx="12.1" cy="12.4" r="12.3" fill="#444746"/><circle cx="5.8" cy="10.4" r="2.2" fill="#fff"/><circle cx="9.4" cy="6.8" r="2.2" fill="#fff"/><circle cx="15.3" cy="6.8" r="2.2" fill="#fff"/><circle cx="18.7" cy="10.4" r="2.2" fill="#fff"/><path d="M12.2 10.3C8.5 10.3 5 14.3 5 17C5 19.3 7 20.6 8.5 20.6C9.8 20.6 10.8 19.6 12.2 19.6C13.6 19.6 14.6 20.6 15.9 20.6C17.4 20.6 19.4 19.3 19.4 17C19.4 14.3 15.9 10.3 12.2 10.3Z" fill="#fff"/></svg>
<div class="a" style="left:1438.3px;top:105.7px;width:4.6px;height:4.6px;border-radius:50%;background:#444746"></div>
<div class="a" style="left:1438.3px;top:112.7px;width:4.6px;height:4.6px;border-radius:50%;background:#444746"></div>
<div class="a" style="left:1438.3px;top:119.7px;width:4.6px;height:4.6px;border-radius:50%;background:#444746"></div>
<svg class="a" style="left:1480px;top:105px" width="21" height="21" viewBox="0 0 21 21"><path d="M12.2 2.9H18.9V9.3M8.5 18.5H2.2V12" fill="none" stroke="#444746" stroke-width="2"/></svg>
<svg class="a" style="left:1530px;top:105px" width="21" height="21" viewBox="0 0 21 21"><path d="M2.5 2.5L18.5 18.5M18.5 2.5L2.5 18.5" fill="none" stroke="#444746" stroke-width="2.2"/></svg>
<div class="a" style="left:1154px;top:165px;width:401px;height:50px;border-radius:25px;background:#d3e3fd"></div>
<svg class="a" style="left:1259px;top:180px" width="20" height="20" viewBox="0 0 20 20"><path d="M9 2.5H3.5a1 1 0 0 0-1 1V16.5a1 1 0 0 0 1 1H16.5a1 1 0 0 0 1-1V11M11 2.5H17.5V9M17.5 2.5L8.5 11.5" fill="none" stroke="#0842a0" stroke-width="2"/></svg>
<div class="t" id="create" style="left:1289.74px;top:181.01px;font-size:18px;color:#0842a0;font-weight:400;-webkit-text-stroke:0.25px #0842a0;">Create a new Gem</div>
<div class="t" id="d1" style="left:1153.24px;top:241.71px;font-size:15.7px;color:#1f1f1f;font-weight:400;transform:scaleX(0.9958);transform-origin:0 0;-webkit-text-stroke:0.15px #1f1f1f;">Gems are experts that can help you with specific tasks.</div>
<div class="t" id="d2" style="left:1153.28px;top:261.71px;font-size:15.7px;color:#1f1f1f;font-weight:400;-webkit-text-stroke:0.15px #1f1f1f;">Start chatting with a pre-made Gem, or create your own</div>
<div class="t" id="d3" style="left:1153.96px;top:281.71px;font-size:15.7px;color:#1f1f1f;font-weight:400;-webkit-text-stroke:0.15px #1f1f1f;">that's an expert in exactly what you need.</div>
<div class="t" id="yg" style="left:1153.93px;top:321.90px;font-size:14px;color:#1f1f1f;font-weight:400;transform:scaleX(0.9964);transform-origin:0 0;-webkit-text-stroke:0.25px #1f1f1f;">Your Gems</div>
<div class="a" style="left:1154px;top:354px;width:401px;height:95px;background:#f0f4f9;border-radius:20px 20px 4px 4px"></div>
<div class="a" style="left:1154px;top:452px;width:401px;height:93px;background:#f0f4f9;border-radius:4px 4px 20px 20px"></div>
<div class="a" style="left:1174px;top:379px;width:44px;height:44px;border-radius:50%;background:#f3d0fd"></div>

<div class="t" id="av1" style="left:596px;width:1200px;text-align:center;top:391.49px;font-size:19.5px;color:#9a1bc9;font-weight:400;-webkit-text-stroke:0.6px #9a1bc9;">O</div>
<div class="a" style="left:1174px;top:476px;width:44px;height:44px;border-radius:50%;background:#fdcfe0"></div>

<div class="t" id="av2" style="left:596px;width:1200px;text-align:center;top:488.49px;font-size:19.5px;color:#9c2f62;font-weight:400;-webkit-text-stroke:0.4px #9c2f62;">S</div>
<div class="t" id="okr" style="left:1237.52px;top:393.31px;font-size:15.7px;color:#1f1f1f;font-weight:400;transform:scaleX(0.9598);transform-origin:0 0;-webkit-text-stroke:0.25px #1f1f1f;">OKR Writer</div>
<div class="t" id="strat" style="left:1237.74px;top:490.11px;font-size:15.7px;color:#1f1f1f;font-weight:400;transform:scaleX(1.0060);transform-origin:0 0;-webkit-text-stroke:0.25px #1f1f1f;">Strategy Helper</div>
<div class="t" id="prem" style="left:1153.77px;top:563.45px;font-size:14px;color:#1f1f1f;font-weight:400;transform:scaleX(1.0293);transform-origin:0 0;-webkit-text-stroke:0.25px #1f1f1f;">Premade by Google</div>
<div class="a" style="left:1154px;top:596px;width:401px;height:93px;background:#f0f4f9;border-radius:20px 20px 4px 4px"></div>
<div class="a" style="left:1154px;top:692.5px;width:401px;height:93.5px;background:#f0f4f9;border-radius:4px 4px 4px 4px"></div>
<div class="a" style="left:1154px;top:789.5px;width:401px;height:93.5px;background:#f0f4f9;border-radius:4px 4px 4px 4px"></div>
<div class="a" style="left:1154px;top:886px;width:401px;height:64px;background:#f0f4f9;border-radius:4px 4px 4px 4px"></div>
<div class="a" style="left:1174px;top:620.5px;width:44px;height:44px;border-radius:50%;background:#f3d0fd"></div>

<svg class="a" style="left:1185px;top:631px" width="23" height="23" viewBox="0 0 23 23"><path d="M10.5 4.5H3a1 1 0 0 0-1 1V19.5a1 1 0 0 0 1 1H18a1 1 0 0 0 1-1V12" fill="none" stroke="#9a1bc9" stroke-width="2"/><path d="M19.2 1.3a1.8 1.8 0 0 1 2.5 2.5L13 12.5 9.5 13.5 10.5 10Z" fill="#9a1bc9"/></svg>
<div class="a" style="left:1174px;top:717.4px;width:44px;height:44px;border-radius:50%;background:#fdcfb0"></div>

<svg class="a" style="left:1185px;top:728px" width="22" height="22" viewBox="0 0 22 22"><path d="M11 2.5a6 6 0 0 0-3.5 10.9V16h7v-2.6A6 6 0 0 0 11 2.5z" fill="none" stroke="#8a3c08" stroke-width="1.8"/><path d="M8 18.5h6M9 12l2 2 2-2M11 14v2" fill="none" stroke="#8a3c08" stroke-width="1.8"/></svg>
<div class="a" style="left:1174px;top:814.25px;width:44px;height:44px;border-radius:50%;background:#97e3e6"></div>

<svg class="a" style="left:1185px;top:825px" width="22" height="22" viewBox="0 0 22 22"><path d="M6 16V4h11v13a2 2 0 0 1-2 2H5a2 2 0 0 1-2-2v-1h10v1" fill="none" stroke="#006064" stroke-width="1.8" stroke-linejoin="round"/><path d="M8.5 7.5h6M8.5 10.5h6M8.5 13.5h3" stroke="#006064" stroke-width="1.6"/></svg>
<div class="a" style="left:1174px;top:911px;width:44px;height:44px;border-radius:50%;background:#e5d8fc"></div>

<div class="t" id="we" style="left:1238.84px;top:614.21px;font-size:15.7px;color:#1f1f1f;font-weight:400;transform:scaleX(1.0311);transform-origin:0 0;-webkit-text-stroke:0.25px #1f1f1f;">Writing editor</div>
<div class="t" id="we1" style="left:1237.21px;top:634.51px;font-size:15.7px;color:#5f6368;font-weight:400;transform:scaleX(1.0163);transform-origin:0 0;-webkit-text-stroke:0.2px #5f6368;">Elevate your writing. Get clear,</div>
<div class="t" id="we2" style="left:1237.44px;top:654.21px;font-size:15.7px;color:#5f6368;font-weight:400;transform:scaleX(1.0263);transform-origin:0 0;-webkit-text-stroke:0.2px #5f6368;">constructive feedback, from grammar to...</div>
<div class="t" id="bs" style="left:1236.81px;top:711.11px;font-size:15.7px;color:#1f1f1f;font-weight:400;transform:scaleX(1.0287);transform-origin:0 0;-webkit-text-stroke:0.25px #1f1f1f;">Brainstormer</div>
<div class="t" id="bs1" style="left:1237.00px;top:731.41px;font-size:15.7px;color:#5f6368;font-weight:400;transform:scaleX(1.0044);transform-origin:0 0;-webkit-text-stroke:0.2px #5f6368;">Find inspiration easily. Fresh ideas for</div>
<div class="t" id="bs2" style="left:1237.28px;top:751.11px;font-size:15.7px;color:#5f6368;font-weight:400;transform:scaleX(1.0155);transform-origin:0 0;-webkit-text-stroke:0.2px #5f6368;">parties, gifts, businesses and more.</div>
<div class="t" id="cc" style="left:1238.18px;top:808.31px;font-size:15.7px;color:#1f1f1f;font-weight:400;transform:scaleX(1.0123);transform-origin:0 0;-webkit-text-stroke:0.25px #1f1f1f;">Copy creator</div>
<div class="t" id="cc1" style="left:1238.12px;top:828.31px;font-size:15.7px;color:#5f6368;font-weight:400;transform:scaleX(1.0313);transform-origin:0 0;-webkit-text-stroke:0.2px #5f6368;">Get help writing branded content that</div>
<div class="t" id="cc2" style="left:1237.32px;top:847.96px;font-size:15.7px;color:#5f6368;font-weight:400;transform:scaleX(1.0189);transform-origin:0 0;-webkit-text-stroke:0.2px #5f6368;">appeals to your audience.</div>
<div class="t" id="sp" style="left:1237.74px;top:904.71px;font-size:15.7px;color:#1f1f1f;font-weight:400;transform:scaleX(1.0145);transform-origin:0 0;-webkit-text-stroke:0.25px #1f1f1f;">Sales pitch ideator</div>
<div class="a" style="left:1150px;top:920px;width:410px;height:76px;background:#fff"></div>
<div class="a" style="left:1560px;top:155px;width:10px;height:580px;border-radius:5px;background:#dadce0"></div>
<div class="t" id="f1" style="left:1184.32px;top:941.30px;font-size:15px;color:#5f6368;font-weight:400;transform:scaleX(0.9760);transform-origin:0 0;">Gemini for Workspace can make mistakes, including</div>
<div class="t" id="f2" style="left:1204.50px;top:961.05px;font-size:15px;color:#5f6368;font-weight:400;transform:scaleX(0.9935);transform-origin:0 0;">about people, so double-check it. <span style="color:#1f1f1f;text-decoration:underline;text-underline-offset:3px">Learn more</span></div>
</body></html>
